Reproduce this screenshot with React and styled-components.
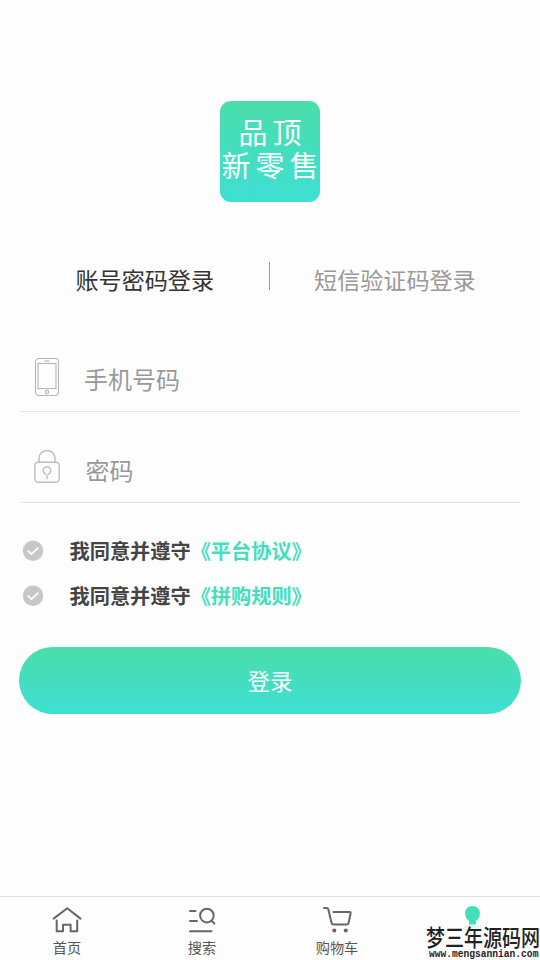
import React, { useState } from "react";
import styled, { createGlobalStyle } from "styled-components";

const agreements = [
  { id: 1, name: "《平台协议》" },
  { id: 2, name: "《拼购规则》" },
];

function App() {
  const [mode, setMode] = useState("password");

  return (
    <>
      <GlobalStyle />
      <Wrapper>
        <Logo>
          <LogoText>品顶</LogoText>
          <LogoText>新零售</LogoText>
        </Logo>

        <TabBar>
          <Tab $left="75.5px" $active={mode === "password"} onClick={() => setMode("password")}>
            账号密码登录
          </Tab>
          <Divider />
          <Tab $left="44px" $active={mode === "sms"} onClick={() => setMode("sms")}>
            短信验证码登录
          </Tab>
        </TabBar>

        <Form>
          <Field>
            <PhoneIcon />
            <Input type="text" placeholder="手机号码" $left="24.5px" />
          </Field>
          <Field>
            <LockIcon />
            <Input type="password" placeholder="密码" $left="26px" />
          </Field>
        </Form>

        <AgreementList>
          {agreements.map((item) => (
            <Agreement key={item.id}>
              <CheckIcon />
              <p>
                我同意并遵守<span>{item.name}</span>
              </p>
            </Agreement>
          ))}
        </AgreementList>

        <LoginBtn>登录</LoginBtn>

        <NavBar>
          <NavItem>
            <HomeIcon />
            <p>首页</p>
          </NavItem>
          <NavItem>
            <SearchIcon />
            <p>搜索</p>
          </NavItem>
          <NavItem>
            <CartIcon />
            <p>购物车</p>
          </NavItem>
          <NavItem>
            <UserIcon />
          </NavItem>
          <Watermark>
            <WatermarkName>梦三年源码网</WatermarkName>
            <WatermarkUrl>www.mengsannian.com</WatermarkUrl>
          </Watermark>
        </NavBar>
      </Wrapper>
    </>
  );
}

export default App;

const PhoneIcon = () => (
  <svg width="26" height="40" viewBox="0 0 26 40" fill="none" stroke="#b5b5b5" strokeWidth="1.1">
    <rect x="1.5" y="1.5" width="23" height="37" rx="3.5" />
    <rect x="4" y="6.5" width="18" height="25" />
    <path d="M10.5 4h5" />
    <circle cx="13" cy="35" r="1.6" />
  </svg>
);

const LockIcon = () => (
  <svg width="26" height="40" viewBox="0 0 26 40" fill="none" stroke="#bdbdbd" strokeWidth="1.4">
    <rect x="0.8" y="14.3" width="24.4" height="20" rx="3.5" />
    <path d="M5 14V10.5a8 8 0 0 1 16 0V14" />
    <path d="M13 31.2v-4.6M12 26.2a3.8 3.8 0 1 1 2 0" />
  </svg>
);

const CheckIcon = () => (
  <svg width="22" height="22" viewBox="0 0 22 22" fill="none">
    <circle cx="11" cy="10.7" r="10.2" fill="#c7c7c7" />
    <path d="M5.8 10.7l3.7 3.4 6.9-6.5" stroke="#fff" strokeWidth="1.8" />
  </svg>
);

const HomeIcon = () => (
  <svg width="30" height="28" viewBox="0 0 30 28" fill="none" stroke="#666" strokeWidth="2" strokeLinecap="round" strokeLinejoin="round">
    <path d="M1.7 12.6L15.2 2.3l13.3 10.3" />
    <path d="M4.7 14.4v10.9h6.3v-6.5h7.6v6.5h6.6V14.4" />
  </svg>
);

const SearchIcon = () => (
  <svg width="30" height="28" viewBox="0 0 30 28" fill="none" stroke="#666" strokeWidth="2" strokeLinecap="round">
    <path d="M3 5.1h5.5M3 15h7M3 25.3h21.5" />
    <circle cx="19.9" cy="9.6" r="6.8" />
    <path d="M24.5 14.6l2.8 3" />
  </svg>
);

const CartIcon = () => (
  <svg width="30" height="28" viewBox="0 0 30 28" fill="none" stroke="#666" strokeWidth="2" strokeLinecap="round" strokeLinejoin="round">
    <path d="M2 2h2.6q1.3 0 1.7 1.3l3.2 13.4q.4 1.8 2.2 1.8h12.7q1.8 0 2.2-1.8L28.6 7.5q.3-1.4-1.1-1.4H11.5" />
    <circle cx="12.3" cy="24.6" r="2" fill="#666" stroke="none" />
    <circle cx="23.8" cy="24.6" r="2" fill="#666" stroke="none" />
  </svg>
);

const UserIcon = () => (
  <svg width="30" height="28" viewBox="0 0 30 28" fill="#43dfb9">
    <path d="M15.5 0c4.4 0 7.4 3.1 7.4 7.2 0 3.5-1.5 6.2-4 7.9v3.4h-6.8v-3.4c-2.5-1.7-4-4.4-4-7.9C8.1 3.1 11.1 0 15.5 0z" />
    <path d="M12 18.5h7l6 2.8v4H6v-4z" opacity=".12" />
  </svg>
);

const GlobalStyle = createGlobalStyle`
  * {
    box-sizing: border-box;
  }
  body {
    margin: 0;
    background-color: #fdfdfd;
    font-family: "Noto Sans CJK SC", sans-serif;
  }
  p {
    margin: 0;
  }
`;

const Wrapper = styled.div`
  width: 540px;
  height: 960px;
  display: flex;
  flex-direction: column;
  overflow: hidden;
  background-color: #fdfdfd;
`;

const Logo = styled.div`
  width: 100px;
  height: 101px;
  margin: 101px auto 0;
  padding-top: 14px;
  border-radius: 11px;
  background: linear-gradient(#4adeaa, #3edfd4);
  flex-shrink: 0;
`;

const LogoText = styled.p`
  color: white;
  font-size: 29px;
  font-weight: 400;
  line-height: 33px;
  letter-spacing: 5px;
  margin-right: -5px;
  text-align: center;
  white-space: nowrap;
`;

const TabBar = styled.div`
  display: flex;
  align-items: center;
  height: 36px;
  margin-top: 58px;
`;

const Tab = styled.div`
  margin-left: ${(props) => props.$left};
  padding-top: 1px;
  color: ${(props) => (props.$active ? "#333" : "#999")};
  font-size: 23.1px;
  line-height: 34px;
  white-space: nowrap;
  cursor: pointer;
`;

const Divider = styled.div`
  width: 1px;
  height: 28px;
  margin: 0 0 5px 55px;
  background-color: #999;
`;

const Form = styled.div`
  margin: 25px 20px 0 21px;
`;

const Field = styled.div`
  display: flex;
  align-items: center;
  height: 91px;
  padding: 22px 0 0 12.5px;
  border-bottom: 1px solid #e4e4e4;
`;

const Input = styled.input`
  flex: 1;
  height: 42px;
  margin-left: ${(props) => props.$left};
  padding: 2px 0 0;
  border: none;
  outline: none;
  background: transparent;
  color: #333;
  font-family: inherit;
  font-size: 24px;
  &::placeholder {
    color: #999;
  }
`;

const AgreementList = styled.div`
  margin: 25px 0 0 22px;
`;

const Agreement = styled.div`
  display: flex;
  align-items: center;
  height: 45px;
  p {
    margin-left: 25.5px;
    color: #444;
    font-size: 20.2px;
    font-weight: 700;
    line-height: 30px;
  }
  span {
    color: #43dfc0;
  }
`;

const LoginBtn = styled.button`
  height: 67px;
  margin: 29px 19px 0;
  padding: 0 0 2px;
  border: none;
  border-radius: 34px;
  background: linear-gradient(#4adeaa, #3edfd4);
  color: white;
  font-family: inherit;
  font-size: 22.4px;
  cursor: pointer;
`;

const NavBar = styled.div`
  position: relative;
  display: grid;
  grid-template-columns: repeat(4, 1fr);
  height: 64px;
  margin-top: auto;
  border-top: 1px solid #ddd;
`;

const NavItem = styled.div`
  display: flex;
  flex-direction: column;
  align-items: center;
  padding: 9px 1px 0 0;
  p {
    margin-top: 3px;
    color: #555;
    font-size: 14.2px;
    line-height: 20px;
  }
`;

const Watermark = styled.div`
  position: absolute;
  left: 426px;
  bottom: 0;
  width: 114px;
  height: 36px;
  color: #222;
  white-space: nowrap;
`;

const WatermarkName = styled.p`
  font-size: 19px;
  font-weight: 500;
  line-height: 24px;
  transform: scaleY(1.22);
`;

const WatermarkUrl = styled.p`
  margin: 1px 0 0 3px;
  font-family: "Liberation Mono", monospace;
  font-size: 9.6px;
  font-weight: 700;
  line-height: 11px;
  transform: scaleY(1.1);
`;
